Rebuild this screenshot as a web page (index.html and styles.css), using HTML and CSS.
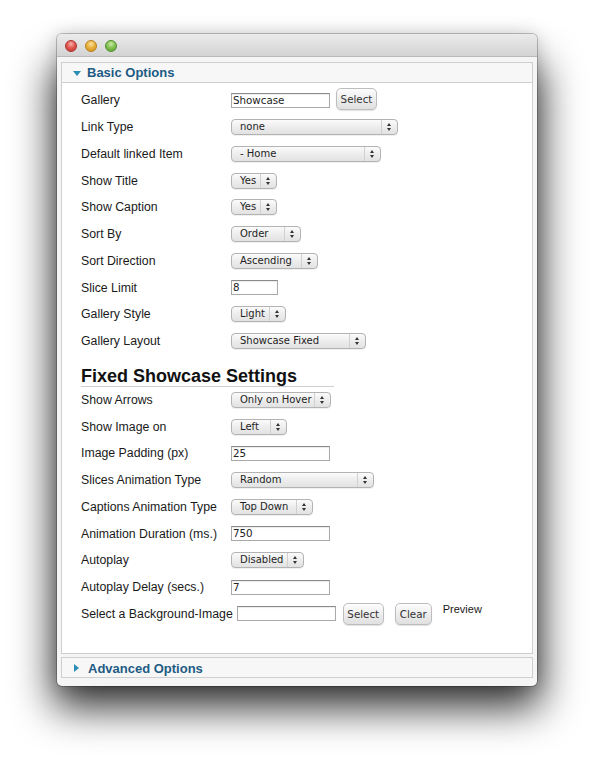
FILE: index.html
```html
<!DOCTYPE html>
<html>
<head>
<meta charset="utf-8">
<link rel="stylesheet" href="styles.css">
</head>
<body>
<div class="stage">
  <div class="window">
    <div class="titlebar">
      <span class="light red"></span>
      <span class="light yellow"></span>
      <span class="light green"></span>
    </div>
    <div class="content">
      <div class="panel">
        <div class="panel-head"><span class="tri-down"></span>Basic Options</div>
        <div class="panel-body">
          <div class="row"><span class="label">Gallery</span><span class="input w99">Showcase</span><span class="btn b-gal">Select</span></div>
          <div class="row"><span class="label">Link Type</span><span class="select w167"><span class="val">none</span><span class="arrows"></span></span></div>
          <div class="row"><span class="label">Default linked Item</span><span class="select w150"><span class="val">- Home</span><span class="arrows"></span></span></div>
          <div class="row"><span class="label">Show Title</span><span class="select w46"><span class="val">Yes</span><span class="arrows"></span></span></div>
          <div class="row"><span class="label">Show Caption</span><span class="select w46"><span class="val">Yes</span><span class="arrows"></span></span></div>
          <div class="row"><span class="label">Sort By</span><span class="select w70"><span class="val">Order</span><span class="arrows"></span></span></div>
          <div class="row"><span class="label">Sort Direction</span><span class="select w87"><span class="val">Ascending</span><span class="arrows"></span></span></div>
          <div class="row"><span class="label">Slice Limit</span><span class="input w47">8</span></div>
          <div class="row"><span class="label">Gallery Style</span><span class="select w55"><span class="val">Light</span><span class="arrows"></span></span></div>
          <div class="row"><span class="label">Gallery Layout</span><span class="select w135"><span class="val">Showcase Fixed</span><span class="arrows"></span></span></div>

          <h3 class="section-title">Fixed Showcase Settings</h3>

          <div class="row"><span class="label">Show Arrows</span><span class="select w100"><span class="val">Only on Hover</span><span class="arrows"></span></span></div>
          <div class="row"><span class="label">Show Image on</span><span class="select w56"><span class="val">Left</span><span class="arrows"></span></span></div>
          <div class="row"><span class="label">Image Padding (px)</span><span class="input w99">25</span></div>
          <div class="row"><span class="label">Slices Animation Type</span><span class="select w143"><span class="val">Random</span><span class="arrows"></span></span></div>
          <div class="row"><span class="label">Captions Animation Type</span><span class="select w82"><span class="val">Top Down</span><span class="arrows"></span></span></div>
          <div class="row"><span class="label">Animation Duration (ms.)</span><span class="input w99">750</span></div>
          <div class="row"><span class="label">Autoplay</span><span class="select w73"><span class="val">Disabled</span><span class="arrows"></span></span></div>
          <div class="row"><span class="label">Autoplay Delay (secs.)</span><span class="input w99">7</span></div>
          <div class="row"><span class="label">Select a Background-Image</span><span class="input w99"></span><span class="btn b-sel">Select</span><span class="btn b-clr">Clear</span><span class="preview">Preview</span></div>
        </div>
      </div>
      <div class="panel closed">
        <div class="panel-head"><span class="tri-right"></span>Advanced Options</div>
      </div>
    </div>
  </div>
</div>
</body>
</html>
```

FILE: styles.css
```css
html, body {
  margin: 0;
  padding: 0;
  background: #ffffff;
}

.stage {
  padding: 34px 0 0 57px;
  height: 765px;
  box-sizing: border-box;
  position: relative;
  isolation: isolate;
}

.window {
  position: relative;
  width: 480px;
  height: 652px;
  box-sizing: border-box;
  background: #f5f5f5;
  border-radius: 5px;
  box-shadow: 0 0 0 1px rgba(0, 0, 0, 0.22), 0 0 18px rgba(0, 0, 0, 0.18);
  display: flex;
  flex-direction: column;
}

.window::before {
  content: "";
  position: absolute;
  left: -4px;
  right: -4px;
  top: 30px;
  bottom: -22px;
  background: rgba(0, 0, 0, 0.8);
  filter: blur(20px);
  z-index: -1;
  border-radius: 10px;
}

.titlebar {
  height: 23px;
  flex: none;
  border-radius: 5px 5px 0 0;
  background: linear-gradient(#ebebeb, #d3d3d3);
  border-bottom: 1px solid #b9b9b9;
  box-sizing: border-box;
  display: flex;
  align-items: center;
  gap: 8px;
  padding-left: 8px;
  padding-top: 1px;
}

.light {
  width: 12px;
  height: 12px;
  border-radius: 50%;
  box-sizing: border-box;
}

.red {
  background: radial-gradient(circle at 50% 30%, #f9b3ac 0, #e05a52 45%, #c4352d 100%);
  border: 1px solid #a8322b;
}

.yellow {
  background: radial-gradient(circle at 50% 30%, #fbe2a2 0, #e9b23f 45%, #cf8b1a 100%);
  border: 1px solid #b7801c;
}

.green {
  background: radial-gradient(circle at 50% 30%, #cdeaa8 0, #86c256 45%, #58a030 100%);
  border: 1px solid #4f8f2c;
}

.content {
  padding: 5px 4px 7px 4px;
  display: flex;
  flex-direction: column;
  gap: 3px;
}

.panel-head {
  height: 21px;
  box-sizing: border-box;
  border: 1px solid #cfcfcf;
  background: #f7f7f7;
  display: flex;
  align-items: center;
  padding-left: 11px;
  font-family: "Liberation Sans", Arial, sans-serif;
  font-weight: bold;
  font-size: 13px;
  color: #1d5b84;
}

.closed .panel-head {
  padding-top: 1px;
}

.tri-down {
  width: 0;
  height: 0;
  border-left: 4px solid transparent;
  border-right: 4px solid transparent;
  border-top: 5px solid #2b8cb6;
  margin-right: 6px;
  margin-top: 1px;
}

.tri-right {
  width: 0;
  height: 0;
  border-top: 4px solid transparent;
  border-bottom: 4px solid transparent;
  border-left: 5px solid #2b8cb6;
  margin-right: 9px;
  margin-left: 1px;
}

.panel-body {
  background: #ffffff;
  border: 1px solid #cfcfcf;
  border-top: none;
  padding: 4px 0 26px 19px;
}

.row {
  height: 26.75px;
  display: flex;
  align-items: center;
}

.label {
  min-width: 150px;
  padding-right: 4px;
  box-sizing: border-box;
  font-family: "Liberation Sans", Arial, sans-serif;
  font-size: 12.3px;
  color: #1a1a1a;
  white-space: nowrap;
}

.section-title {
  margin: 11px 0 0 0;
  width: 253px;
  height: 19px;
  line-height: 20px;
  border-bottom: 1px solid #cfcfcf;
  font-family: "Liberation Sans", Arial, sans-serif;
  font-size: 18px;
  font-weight: bold;
  color: #111111;
  box-sizing: content-box;
  padding-bottom: 1px;
}

.input {
  height: 15px;
  box-sizing: border-box;
  border: 1px solid #a9a9a9;
  border-top-color: #8a8a8a;
  background: #ffffff;
  font-family: "DejaVu Sans", sans-serif;
  font-size: 10.3px;
  line-height: 13px;
  padding-left: 1px;
  color: #222;
  box-shadow: inset 0 1px 1px rgba(0, 0, 0, 0.08);
}

.select {
  height: 16px;
  box-sizing: border-box;
  border: 1px solid #b3b3b3;
  border-radius: 4px;
  background: linear-gradient(#fbfbfb, #ededed 50%, #e2e2e2);
  box-shadow: 0 1px 0 rgba(0, 0, 0, 0.06);
  display: flex;
  align-items: center;
  font-family: "DejaVu Sans", sans-serif;
  font-size: 10px;
  color: #1e1e1e;
}

.select .val {
  flex: 1;
  padding-left: 8px;
  white-space: nowrap;
  line-height: 14px;
  overflow: hidden;
}

.select .arrows {
  width: 15px;
  height: 100%;
  border-left: 1px solid #d0d0d0;
  position: relative;
  flex: none;
}

.select .arrows::before,
.select .arrows::after {
  content: "";
  position: absolute;
  left: 5px;
  width: 0;
  height: 0;
  border-left: 2.5px solid transparent;
  border-right: 2.5px solid transparent;
}

.select .arrows::before {
  top: 3px;
  border-bottom: 3px solid #333;
}

.select .arrows::after {
  top: 8px;
  border-top: 3px solid #333;
}

.w46 { width: 46px; }
.w47 { width: 47px; }
.w55 { width: 55px; }
.w56 { width: 56px; }
.w70 { width: 70px; }
.w73 { width: 73px; }
.w82 { width: 82px; }
.w87 { width: 87px; }
.w99 { width: 99px; }
.w100 { width: 100px; }
.w135 { width: 135px; }
.w143 { width: 143px; }
.w150 { width: 150px; }
.w167 { width: 167px; }

.btn {
  height: 22px;
  box-sizing: border-box;
  border: 1px solid #bdbdbd;
  border-radius: 5px;
  background: linear-gradient(#fdfdfd, #ececec 55%, #e0e0e0);
  box-shadow: 0 1px 1px rgba(0, 0, 0, 0.12);
  display: flex;
  align-items: center;
  justify-content: center;
  font-family: "DejaVu Sans", sans-serif;
  font-size: 10.3px;
  color: #333;
}

.b-gal {
  width: 41px;
  margin-left: 6px;
  margin-top: -3px;
}

.b-sel {
  width: 41px;
  margin-left: 7px;
}

.b-clr {
  width: 37px;
  margin-left: 11px;
}

.preview {
  margin-left: 11px;
  align-self: flex-start;
  margin-top: 2px;
  font-family: "Liberation Sans", Arial, sans-serif;
  font-size: 11px;
  color: #1a1a1a;
}
```
